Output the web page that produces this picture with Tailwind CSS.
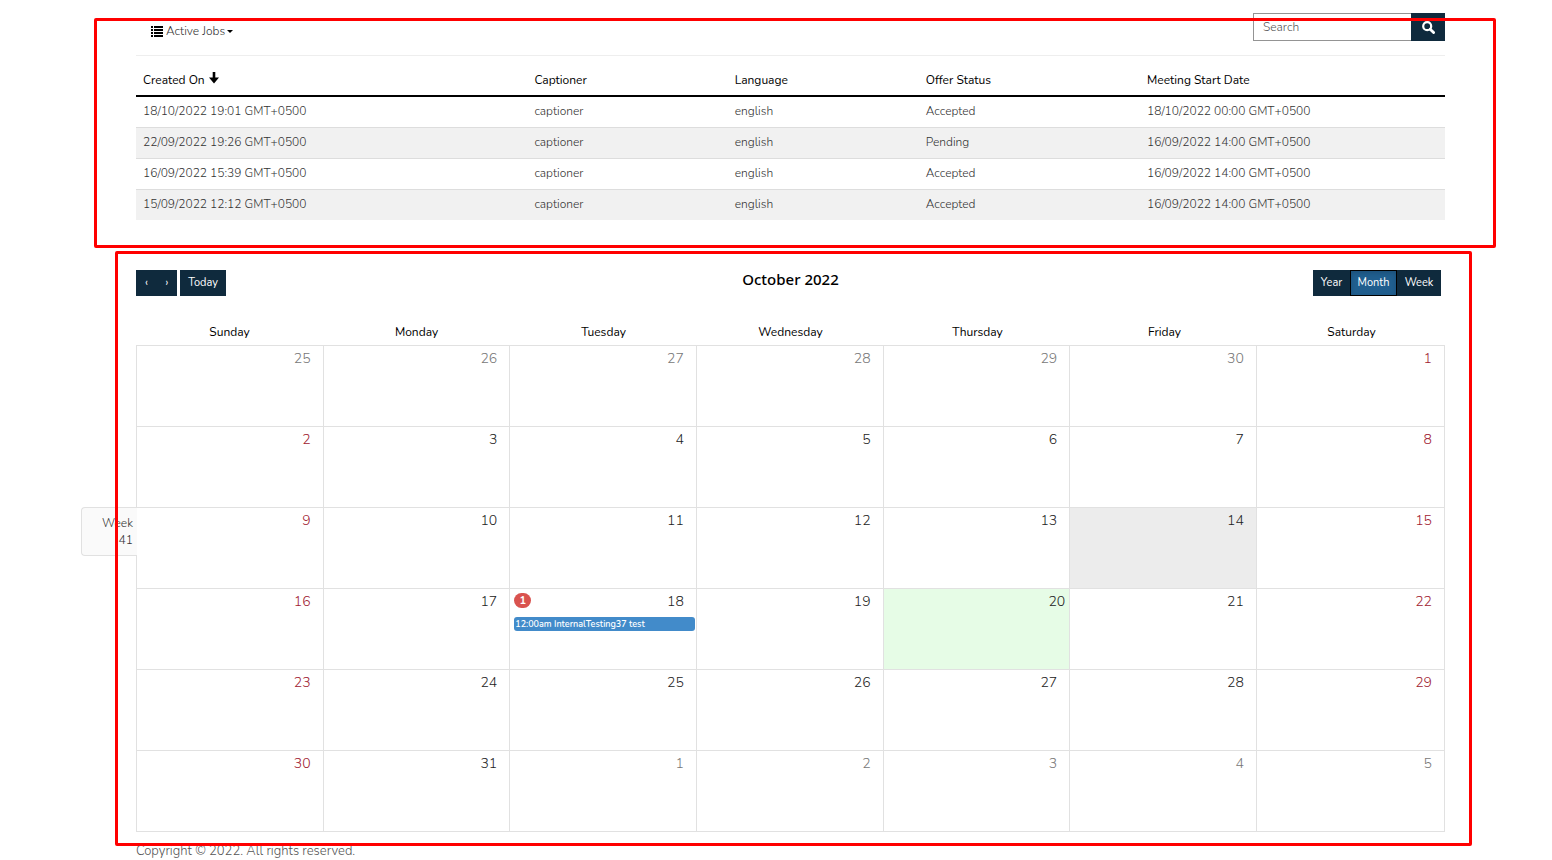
<!DOCTYPE html>
<html lang="en">
<head>
<meta charset="utf-8">
<meta name="viewport" content="width=device-width, initial-scale=1">
<title>Active Jobs</title>
<script src="https://cdn.jsdelivr.net/npm/@tailwindcss/browser@4"></script>
</head>
<body class="bg-white pl-[136px] pr-[107px] font-['Nunito','Open_Sans',sans-serif] text-xs font-light text-[#333] overflow-x-hidden">

<section class="relative pt-[13px]">
  <div class="flex h-[43px] items-start justify-between border-b border-[#eee]">
    <button type="button" class="ml-[15px] mt-2 flex items-center gap-[3px] leading-5">
      <svg class="h-[11px] w-3 text-black" viewBox="0 0 12 11" fill="currentColor" shape-rendering="crispEdges" aria-hidden="true">
        <path d="M0 0h2v2H0zM3 0h9v2H3zM0 3h2v2H0zM3 3h9v2H3zM0 6h2v2H0zM3 6h9v2H3zM0 9h2v2H0zM3 9h9v2H3z"/>
      </svg>
      <span class="flex items-center gap-0.5">Active Jobs
        <svg class="h-[3px] w-1.5 text-black" viewBox="0 0 6 3" fill="currentColor" aria-hidden="true"><path d="M0 0h6L3 3z"/></svg>
      </span>
    </button>
    <form class="flex" role="search">
      <input type="text" aria-label="Search" placeholder="Search" class="h-7 w-[158px] border border-r-0 border-[#949494] px-[9px] placeholder:text-[#555] outline-none">
      <button type="button" aria-label="Submit search" class="flex h-7 w-[34px] items-center justify-center bg-[#0f2a3d] text-white">
        <svg class="size-[13px]" viewBox="0 0 13 13" fill="none" stroke="currentColor" aria-hidden="true"><circle cx="5.2" cy="5.2" r="4" stroke-width="2.2"/><path d="M8.2 8.2l3.400 3.400" stroke-width="2.800" stroke-linecap="round"/></svg>
      </button>
    </form>
  </div>

  <table class="w-full table-fixed border-collapse text-left">
    <colgroup><col class="w-[29.9%]"><col class="w-[15.3%]"><col class="w-[14.6%]"><col class="w-[16.9%]"><col></colgroup>
    <thead class="text-black">
      <tr class="h-[40px] border-b-2 border-black">
        <th class="px-[7px] pt-2 font-normal">
          <span class="flex items-center gap-1">Created On
            <svg class="mb-1 h-3 w-[10px]" viewBox="0 0 10 12" fill="currentColor" aria-hidden="true"><path d="M3.700 0h2.600v5.600H10L5 11.600 0 5.600h3.700z"/></svg>
          </span>
        </th>
        <th class="px-[7px] pt-2 font-normal">Captioner</th>
        <th class="px-[7px] pt-2 font-normal">Language</th>
        <th class="px-[7px] pt-2 font-normal">Offer Status</th>
        <th class="px-[7px] pt-2 font-normal">Meeting Start Date</th>
      </tr>
    </thead>
    <tbody>
      <tr class="h-[31px]"><td class="px-[7px] pb-0.5">18/10/2022 19:01 GMT+0500</td><td class="px-[7px] pb-0.5">captioner</td><td class="px-[7px] pb-0.5">english</td><td class="px-[7px] pb-0.5">Accepted</td><td class="px-[7px] pb-0.5">18/10/2022 00:00 GMT+0500</td></tr>
      <tr class="h-[31px] border-t border-[#ddd] bg-[#f1f1f1]"><td class="px-[7px] pb-0.5">22/09/2022 19:26 GMT+0500</td><td class="px-[7px] pb-0.5">captioner</td><td class="px-[7px] pb-0.5">english</td><td class="px-[7px] pb-0.5">Pending</td><td class="px-[7px] pb-0.5">16/09/2022 14:00 GMT+0500</td></tr>
      <tr class="h-[31px] border-t border-[#ddd]"><td class="px-[7px] pb-0.5">16/09/2022 15:39 GMT+0500</td><td class="px-[7px] pb-0.5">captioner</td><td class="px-[7px] pb-0.5">english</td><td class="px-[7px] pb-0.5">Accepted</td><td class="px-[7px] pb-0.5">16/09/2022 14:00 GMT+0500</td></tr>
      <tr class="h-[31px] border-t border-[#ddd] bg-[#f1f1f1]"><td class="px-[7px] pb-0.5">15/09/2022 12:12 GMT+0500</td><td class="px-[7px] pb-0.5">captioner</td><td class="px-[7px] pb-0.5">english</td><td class="px-[7px] pb-0.5">Accepted</td><td class="px-[7px] pb-0.5">16/09/2022 14:00 GMT+0500</td></tr>
    </tbody>
  </table>
  <div class="pointer-events-none absolute -bottom-7 -left-[42px] -right-[51px] top-[18px] rounded-xs border-3 border-[#f00]" aria-hidden="true"></div>
</section>

<section class="relative mt-[50px]">
  <div class="grid grid-cols-3 items-start">
    <div class="flex gap-[3px] text-[11px] font-normal text-white">
      <div class="flex">
        <button type="button" aria-label="Previous" class="h-[26px] w-[21px] bg-[#0f2a3d]">‹</button>
        <button type="button" aria-label="Next" class="h-[26px] w-5 bg-[#0f2a3d]">›</button>
      </div>
      <button type="button" class="h-[26px] w-[46px] bg-[#0f2a3d]">Today</button>
    </div>
    <h3 class="text-center font-['Noto_Sans',sans-serif] text-[15px] font-medium leading-[18px] text-black">October 2022</h3>
    <div class="flex justify-end pr-1 text-[11px] font-normal text-white">
      <button type="button" class="h-[26px] w-[37px] bg-[#0f2a3d]">Year</button>
      <button type="button" class="h-[26px] w-[47px] border border-black bg-[#205e8e] inset-shadow-[0_2px_4px_rgba(0,0,0,0.15)]">Month</button>
      <button type="button" class="h-[26px] w-[44px] bg-[#0f2a3d]">Week</button>
    </div>
  </div>

  <div class="mt-[26px] grid grid-cols-7 text-center font-normal leading-5 text-black">
    <div>Sunday</div><div>Monday</div><div>Tuesday</div><div>Wednesday</div><div>Thursday</div><div>Friday</div><div>Saturday</div>
  </div>
  <div class="relative mt-[3px]">
    <div id="days" class="grid grid-cols-[repeat(6,14.27%)_1fr] border-l border-t border-[#e1e1e1] text-sm leading-5"></div>
    <div class="absolute -left-[55px] top-[162px] h-[49px] w-14 rounded-l-[4px] border border-r-0 border-[#e1e1e1] bg-[#fafafa] pl-4 pr-1 pt-[7px] text-right text-xs leading-[17px]">Week 41</div>
  </div>
  <div class="pointer-events-none absolute -bottom-[14px] -left-[21px] -right-[27px] -top-[19px] rounded-xs border-3 border-[#f00]" aria-hidden="true"></div>
</section>

<footer class="mt-[11px] text-[13px] leading-4 text-[#555]">Copyright © 2022. All rights reserved.</footer>

<script>
const grid = document.getElementById('days');
for (let i = 0; i < 42; i++) {
  const n = i - 5;
  const inMonth = n >= 1 && n <= 31;
  const day = n < 1 ? n + 30 : n > 31 ? n - 31 : n;
  const cell = document.createElement('div');
  cell.className = 'h-[81px] border-b border-r border-[#e1e1e1] pt-[3px] pl-1 pr-px';
  if (n === 14) cell.classList.add('bg-[#ececec]');
  if (n === 20) cell.classList.add('bg-[#e6fce6]');
  const row = document.createElement('div');
  row.className = 'flex justify-end';
  row.classList.add(n === 20 ? 'pr-[3px]' : 'pr-[11px]');
  const weekend = i % 7 === 0 || i % 7 === 6;
  row.classList.add(!inMonth ? 'text-[#777]' : weekend ? 'text-[#a02030]' : 'text-[#222]');
  row.innerHTML = (n === 18 ? '<span class="mr-auto mt-px flex h-[15px] w-[17px] items-center justify-center rounded-full bg-[#d9534f] text-[11px] font-bold text-white">1</span>' : '') + '<span>' + day + '</span>';
  cell.append(row);
  if (n === 18) {
    const ev = document.createElement('a');
    ev.href = '#';
    ev.className = 'mt-[5px] block h-[14px] overflow-hidden whitespace-nowrap rounded-[3px] bg-[#428bca] px-px text-[9px] font-semibold leading-[14px] text-white';
    ev.textContent = '12:00am InternalTesting37 test';
    cell.append(ev);
  }
  grid.append(cell);
}
</script>
</body>
</html>
